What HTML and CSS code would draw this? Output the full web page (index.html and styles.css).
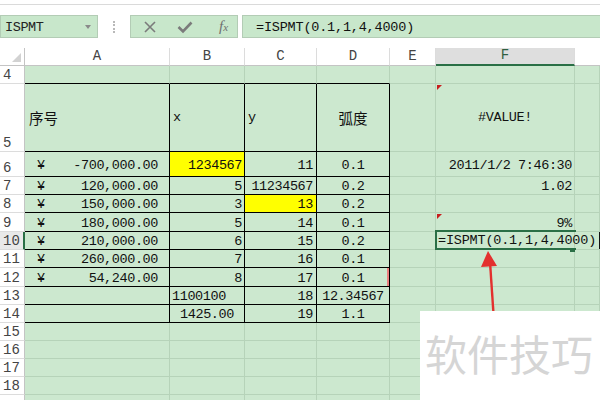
FILE: index.html
```html
<!DOCTYPE html>
<html lang="zh">
<head>
<meta charset="utf-8">
<title>ISPMT</title>
<link rel="stylesheet" href="styles.css">
</head>
<body>
<div class="page">
  <div class="topline"></div>
  <div class="fbar">
    <div class="namebox"><span>ISPMT</span><span class="dd"></span></div>
    <div class="sep"><span class="dots"></span></div>
    <div class="btns">
      <svg class="ico" width="14" height="14" viewBox="0 0 14 14"><path d="M2 2 L12 12 M12 2 L2 12" stroke="#7b7b7b" stroke-width="1.6" fill="none"/></svg>
      <svg class="ico" width="16" height="14" viewBox="0 0 16 14"><path d="M1.5 7 L6 11.5 L14.5 2.5" stroke="#7b7b7b" stroke-width="2.6" fill="none"/></svg>
      <span class="fx">f<small>x</small></span>
    </div>
    <div class="finput">=ISPMT(0.1,1,4,4000)</div>
  </div>

  <div class="sheet">
    <div class="corner"><span class="tri"></span></div><div class="ch">A</div><div class="ch">B</div><div class="ch">C</div><div class="ch">D</div><div class="ch">E</div><div class="ch sel">F</div><div class="ch last"></div>

    <div class="rh">4</div><div class="c tb"></div><div class="c tb"></div><div class="c tb"></div><div class="c tb"></div><div class="c"></div><div class="c"></div><div class="c"></div>

    <div class="rh">5</div><div class="c t mid cjk pl4">序号</div><div class="c t mid">x</div><div class="c t mid">y</div><div class="c t mid ctr cjk">弧度</div><div class="c"></div><div class="c mid ctr cm">#VALUE!</div><div class="c"></div>

    <div class="rh">6</div><div class="c t acct"><span>¥</span><span>-700,000.00</span></div><div class="c t r yel pr2">1234567</div><div class="c t r">11</div><div class="c t ctr">0.1</div><div class="c"></div><div class="c r pr2">2011/1/2 7:46:30</div><div class="c"></div>

    <div class="rh">7</div><div class="c t acct"><span>¥</span><span>120,000.00</span></div><div class="c t r pr2">5</div><div class="c t r">11234567</div><div class="c t ctr">0.2</div><div class="c"></div><div class="c r pr2">1.02</div><div class="c"></div>

    <div class="rh">8</div><div class="c t acct"><span>¥</span><span>150,000.00</span></div><div class="c t r pr2">3</div><div class="c t r yel">13</div><div class="c t ctr">0.2</div><div class="c"></div><div class="c"></div><div class="c"></div>

    <div class="rh">9</div><div class="c t acct"><span>¥</span><span>180,000.00</span></div><div class="c t r pr2">5</div><div class="c t r">14</div><div class="c t ctr">0.1</div><div class="c"></div><div class="c r pr2 cm">9%</div><div class="c"></div>

    <div class="rh sel">10</div><div class="c t acct"><span>¥</span><span>210,000.00</span></div><div class="c t r pr2">6</div><div class="c t r">15</div><div class="c t ctr">0.2</div><div class="c"></div><div class="c editcell"><div class="editor"><span class="etext">=ISPMT(0.1,1,4,4000)</span><span class="caret"></span></div><span class="handle"></span></div><div class="c"></div>

    <div class="rh">11</div><div class="c t acct"><span>¥</span><span>260,000.00</span></div><div class="c t r pr2">7</div><div class="c t r">16</div><div class="c t ctr">0.1</div><div class="c"></div><div class="c"></div><div class="c"></div>

    <div class="rh">12</div><div class="c t acct"><span>¥</span><span>54,240.00</span></div><div class="c t r pr2">8</div><div class="c t r">17</div><div class="c t ctr redmark">0.1</div><div class="c"></div><div class="c"></div><div class="c"></div>

    <div class="rh">13</div><div class="c t"></div><div class="c t pl2">1100100</div><div class="c t r">18</div><div class="c t ctr">12.34567</div><div class="c"></div><div class="c"></div><div class="c"></div>

    <div class="rh">14</div><div class="c t"></div><div class="c t ctr">1425.00</div><div class="c t r">19</div><div class="c t ctr">1.1</div><div class="c"></div><div class="c"></div><div class="c"></div>

    <div class="rh">15</div><div class="c"></div><div class="c"></div><div class="c"></div><div class="c"></div><div class="c"></div><div class="c"></div><div class="c"></div>
    <div class="rh">16</div><div class="c"></div><div class="c"></div><div class="c"></div><div class="c"></div><div class="c"></div><div class="c"></div><div class="c"></div>
    <div class="rh">17</div><div class="c"></div><div class="c"></div><div class="c"></div><div class="c"></div><div class="c"></div><div class="c"></div><div class="c"></div>
    <div class="rh">18</div><div class="c"></div><div class="c"></div><div class="c"></div><div class="c"></div><div class="c"></div><div class="c"></div><div class="c"></div>
    <div class="rh"></div><div class="c"></div><div class="c"></div><div class="c"></div><div class="c"></div><div class="c"></div><div class="c"></div><div class="c"></div>
  </div>

  <svg class="arrow" width="600" height="400" viewBox="0 0 600 400">
    <line x1="493.5" y1="314" x2="490" y2="262" stroke="#e3302e" stroke-width="2.4"/>
    <polygon points="488,251 481,267 497,266" fill="#e3302e"/>
  </svg>
  <div class="wm">软件技巧</div>
</div>
</body>
</html>
```

FILE: styles.css
```css
* { box-sizing: border-box; }
html, body { margin: 0; padding: 0; background: #fff; }
body { width: 600px; height: 400px; overflow: hidden; }

.page {
  position: relative;
  width: 600px;
  height: 400px;
  overflow: hidden;
  padding-top: 4px;
  font-family: "Liberation Mono", "DejaVu Sans Mono", monospace;
  color: #111;
}

.topline { height: 1px; background: #dadada; }

/* formula bar */
.fbar {
  display: flex;
  height: 23px;
  margin-top: 10px;
}
.namebox {
  width: 98px;
  border: 1px solid #b3ccb5;
  background: #c8e7cb;
  display: flex;
  align-items: center;
  justify-content: space-between;
  padding: 1px 6px 0 4px;
  font-size: 13.5px;
  letter-spacing: -0.4px;
  color: #222;
}
.dd {
  width: 0; height: 0;
  border-left: 3.5px solid transparent;
  border-right: 3.5px solid transparent;
  border-top: 4px solid #8a8a8a;
}
.sep {
  width: 32px;
  display: flex;
  align-items: center;
  justify-content: center;
}
.dots {
  height: 12px;
  border-left: 2px dotted #b9b9b9;
}
.btns {
  width: 108px;
  border: 1px solid #b3ccb5;
  background: #c8e7cb;
  display: flex;
  align-items: center;
  padding-left: 12px;
  gap: 20px;
}
.ico { display: block; }
.fx {
  font-family: "Liberation Serif", serif;
  font-style: italic;
  font-size: 15px;
  color: #6f6f6f;
  margin-left: 6px;
}
.fx small { font-size: 11px; }
.finput {
  flex: 1;
  margin-left: 4px;
  border: 1px solid #b3ccb5;
  border-right: none;
  background: #c8e7cb;
  display: flex;
  align-items: center;
  padding: 1px 0 0 13px;
  font-size: 13.5px;
  letter-spacing: -0.2px;
  color: #111;
}

/* sheet grid */
.sheet {
  margin-top: 10px;
  display: grid;
  grid-template-columns: 25px 145px 75px 72px 73px 46px 139px 25px;
  grid-template-rows: 18px 18px 68px 25px 18px 18px 19px 18px 18px 19px 18px 18px 18px 18px 18px 18px 18px;
}

.corner {
  background: #fff;
  border-right: 1px solid #c4c4c4;
  border-bottom: 1px solid #c4c4c4;
  position: relative;
}
.tri {
  position: absolute;
  right: 3px;
  bottom: 3px;
  width: 0; height: 0;
  border-left: 9px solid transparent;
  border-bottom: 9px solid #d2d2d2;
}

.ch {
  background: #fff;
  border-right: 1px solid #dcdcdc;
  border-bottom: 1px solid #c4c4c4;
  display: flex;
  align-items: flex-end;
  justify-content: center;
  font-size: 14px;
  color: #444;
  padding-bottom: 1px;
}
.ch.last { border-right: none; }
.ch.sel {
  background: #dedede;
  border-bottom: 2px solid #2a6f46;
  color: #2f5f40;
}

.rh {
  background: #fff;
  border-right: 1px solid #c4c4c4;
  border-bottom: 1px solid #dcdcdc;
  display: flex;
  align-items: flex-end;
  padding: 0 0 1px 3px;
  font-size: 14px;
  line-height: 14px;
  color: #444;
}
.rh.sel {
  background: #e9e9e9;
  border-right: 2px solid #2a6f46;
}

.c {
  background: #cce8cf;
  border-right: 1px solid #b6d3b9;
  border-bottom: 1px solid #b6d3b9;
  display: flex;
  align-items: center;
  padding: 2px 3px 0 3px;
  white-space: nowrap;
  font-size: 13.5px;
  letter-spacing: -0.4px;
  color: #111;
  position: relative;
}
.c.t { border-right-color: #000; border-bottom-color: #000; }
.c.tb { border-bottom-color: #000; }
.c.mid { padding-top: 0; }
.c.r { justify-content: flex-end; }
.c.ctr { justify-content: center; }
.c.pr2 { padding-right: 2px; }
.c.pl2 { padding-left: 2px; }
.c.pl4 { padding-left: 4px; }
.c.cjk {
  font-family: "Noto Sans CJK SC", sans-serif;
  font-size: 14.5px;
  letter-spacing: 0;
}
.c.yel { background: #ffff00; }
.c.acct {
  justify-content: space-between;
  padding-left: 12px;
  padding-right: 11px;
}
.c.cm::before {
  content: "";
  position: absolute;
  left: 1px;
  top: 1px;
  width: 0; height: 0;
  border-top: 5px solid #c81e1e;
  border-right: 5px solid transparent;
}
.c.redmark { box-shadow: inset -2px 0 0 #ec8080; }

/* in-cell editor of F10 */
.editcell { z-index: 2; }
.editor {
  position: absolute;
  left: -1px;
  top: -2px;
  width: 141px;
  height: 20px;
  border: 2px solid #2a6f46;
  border-right: none;
  display: flex;
  align-items: center;
  padding: 1px 0 0 1px;
  font-size: 13.5px;
  letter-spacing: -0.2px;
  white-space: nowrap;
  overflow: visible;
}
.caret {
  display: inline-block;
  width: 0;
  height: 17px;
  border-left: 1.5px solid #111;
  margin-left: 3px;
}
.handle {
  position: absolute;
  right: -1px;
  bottom: -3px;
  width: 5px;
  height: 4px;
  background: #2a6f46;
}

/* overlays */
.arrow {
  position: absolute;
  left: 0;
  top: 0;
  pointer-events: none;
  z-index: 5;
}
.wm {
  position: absolute;
  left: 420px;
  top: 311px;
  right: 0;
  bottom: 0;
  background: #fff;
  z-index: 6;
  font-family: "Noto Sans CJK SC", sans-serif;
  font-size: 42px;
  line-height: 42px;
  color: #d5d5d5;
  padding: 21px 0 0 5px;
  white-space: nowrap;
}
```
